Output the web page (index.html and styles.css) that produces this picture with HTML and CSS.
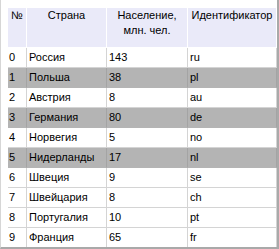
FILE: index.html
```html
<!DOCTYPE html>
<html>
<head>
<meta charset="utf-8">
<link rel="stylesheet" href="styles.css">
</head>
<body>
<div class="frame">
  <table class="grid">
    <colgroup>
      <col class="c-num">
      <col class="c-country">
      <col class="c-pop">
      <col class="c-id">
    </colgroup>
    <thead>
      <tr>
        <th>№</th>
        <th>Страна</th>
        <th>Население,<br>млн. чел.</th>
        <th>Идентификатор</th>
      </tr>
    </thead>
    <tbody>
      <tr><td>0</td><td>Россия</td><td>143</td><td>ru</td></tr>
      <tr class="alt"><td>1</td><td>Польша</td><td>38</td><td>pl</td></tr>
      <tr><td>2</td><td>Австрия</td><td>8</td><td>au</td></tr>
      <tr class="alt"><td>3</td><td>Германия</td><td>80</td><td>de</td></tr>
      <tr><td>4</td><td>Норвегия</td><td>5</td><td>no</td></tr>
      <tr class="alt"><td>5</td><td>Нидерланды</td><td>17</td><td>nl</td></tr>
      <tr><td>6</td><td>Швеция</td><td>9</td><td>se</td></tr>
      <tr><td>7</td><td>Швейцария</td><td>8</td><td>ch</td></tr>
      <tr><td>8</td><td>Португалия</td><td>10</td><td>pt</td></tr>
      <tr><td>9</td><td>Франция</td><td>65</td><td>fr</td></tr>
    </tbody>
  </table>
</div>
</body>
</html>
```
FILE: styles.css
```css
html, body {
  margin: 0;
  padding: 0;
  background: #ffffff;
}

.frame {
  box-sizing: border-box;
  width: 279px;
  height: 249px;
  padding: 8px 0 0 7px;
  border-left: 1px solid #d6d6d6;
  border-right: 2px solid #a9a9a9;
  border-bottom: 2px solid #a9a9a9;
  overflow: hidden;
  font-family: "Liberation Sans", Arial, sans-serif;
  font-size: 11px;
  color: #000;
}

.grid {
  table-layout: fixed;
  border-collapse: separate;
  border-spacing: 0;
  width: 269px;
}

.c-num { width: 19px; }
.c-country { width: 80px; }
.c-pop { width: 81px; }
.c-id { width: 89px; }

.grid th {
  box-sizing: border-box;
  height: 40px;
  padding: 0;
  background: #eaeaf9;
  border-right: 1px solid #ffffff;
  border-bottom: 1px solid #ffffff;
  font-weight: normal;
  text-align: center;
  vertical-align: top;
  line-height: 15px;
  white-space: nowrap;
  overflow: hidden;
}

.grid td {
  box-sizing: border-box;
  height: 20px;
  padding: 0 0 1px 2px;
  border-right: 1px solid #d4d4d4;
  border-bottom: 1px solid #d4d4d4;
  text-align: left;
  vertical-align: middle;
  line-height: 14px;
  white-space: nowrap;
  overflow: hidden;
}

.grid td:first-child {
  padding-left: 1px;
}

.grid tr.alt td {
  background: #b4b4b4;
  border-right-color: #a4a4a4;
  border-bottom-color: #b4b4b4;
}
```
